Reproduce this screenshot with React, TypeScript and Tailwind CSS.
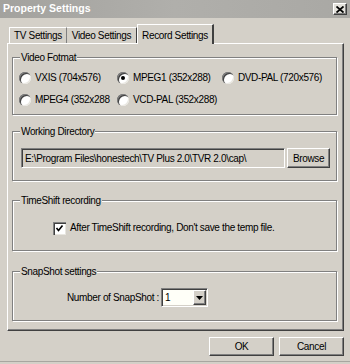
import React from 'react';

const sunken = 'border border-t-[#808080] border-l-[#808080] border-r-white border-b-white shadow-[inset_1px_1px_0_#404040,inset_-1px_-1px_0_#d4d0c8]';
const raised = 'border border-t-white border-l-white border-r-[#404040] border-b-[#404040] shadow-[inset_-1px_-1px_0_#808080]';

function Group({ title, className, children }: { title: string; className: string; children: React.ReactNode }) {
    return (
        <div className={`relative border border-[#808080] shadow-[inset_1px_1px_0_#fff,1px_1px_0_#fff] ${className}`}>
            <span className="absolute -top-[7px] left-[7px] px-[1px] bg-[#d4d0c8] leading-[13px]">{title}</span>
            {children}
        </div>
    );
}

function Radio({ label, checked, width }: { label: string; checked?: boolean; width: string }) {
    return (
        <div className={`flex items-center gap-[4px] ${width}`}>
            <span className="relative w-[12px] h-[12px] rounded-full bg-white shadow-[inset_1px_1px_0_#808080,inset_2px_2px_0_#404040,inset_-1px_-1px_0_#e8e6e0] flex items-center justify-center">
                {checked && <span className="w-[4px] h-[4px] rounded-full bg-black" />}
            </span>
            <span className="leading-[14px] whitespace-nowrap">{label}</span>
        </div>
    );
}

export default function App() {
    return (
        <div className="w-[350px] h-[364px] bg-[#d4d0c8] text-black text-[10px] tracking-[-0.35px] flex flex-col overflow-hidden" style={{ fontFamily: '"Liberation Sans", Arial, sans-serif' }}>
            {/* Title bar */}
            <div className="h-[18px] flex items-center justify-between pl-[3px] pr-[3px] bg-gradient-to-r from-[#a3a29e] via-[#b0afab] to-[#a9a8a4]">
                <span className="text-white font-bold text-[10.5px] tracking-normal">Property Settings</span>
                <span className={`w-[14px] h-[12px] bg-[#e4e2dc] flex items-center justify-center ${raised}`}>
                    <svg width="8" height="7" viewBox="0 0 8 7">
                        <path d="M0.5 0.5 L7.5 6.5 M7.5 0.5 L0.5 6.5" stroke="#000" strokeWidth="1.8" />
                    </svg>
                </span>
            </div>

            <div className="pl-[7px] pr-[6px] pt-[6px] flex flex-col">
                {/* Tabs */}
                <div className="flex items-end h-[19px] pl-[2px]">
                    <div className="w-[58px] h-[16px] flex items-center justify-center border-t border-l border-white border-r border-r-[#808080]">TV Settings</div>
                    <div className="w-[70px] h-[16px] flex items-center justify-center border-t border-white border-r border-r-[#404040]">Video Settings</div>
                    <div className="relative z-10 w-[77px] h-[20px] -mb-px bg-[#d4d0c8] flex items-start pt-[3px] justify-center border-t border-l border-white border-r-2 border-r-[#404040]">Record Settings</div>
                </div>

                {/* Panel */}
                <div className="h-[288px] border border-t-white border-l-white border-r-[#404040] border-b-[#404040] shadow-[inset_-1px_-1px_0_#808080] pl-[4px] pr-[6px] flex flex-col">
                    <Group title="Video Fotmat" className="mt-[13px] h-[58px] pt-[13px] pl-[6px]">
                        <div className="flex">
                            <Radio label="VXIS (704x576)" width="w-[98px]" />
                            <Radio label="MPEG1 (352x288)" checked width="w-[105px]" />
                            <Radio label="DVD-PAL (720x576)" width="w-[100px]" />
                        </div>
                        <div className="flex mt-[8px]">
                            <Radio label="MPEG4 (352x288" width="w-[98px]" />
                            <Radio label="VCD-PAL (352x288)" width="w-[105px]" />
                        </div>
                    </Group>

                    <Group title="Working Directory" className="mt-[16px] h-[50px] pt-[16px] pl-[8px]">
                        <div className="flex gap-[2px]">
                            <div className={`w-[264px] h-[20px] flex items-center pl-[3px] ${sunken}`}>
                                E:\Program Files\honestech\TV Plus 2.0\TVR 2.0\cap\
                            </div>
                            <button className={`w-[43px] h-[20px] bg-[#d4d0c8] flex items-center justify-center ${raised}`}>Browse</button>
                        </div>
                    </Group>

                    <Group title="TimeShift recording" className="mt-[19px] h-[51px] pt-[20px] pl-[40px]">
                        <div className="flex items-center gap-[4px] h-[14px]">
                            <span className="w-[13px] h-[13px] bg-white shadow-[inset_1px_1px_0_#808080,inset_2px_2px_0_#404040,inset_-1px_-1px_0_#e8e6e0] flex items-center justify-center">
                                <svg width="9" height="9" viewBox="0 0 9 9">
                                    <path d="M1.5 4 L3.5 6.5 L7.5 1.5" stroke="#000" strokeWidth="1.6" fill="none" />
                                </svg>
                            </span>
                            <span className="leading-[14px]">After TimeShift recording, Don't save the temp file.</span>
                        </div>
                    </Group>

                    <Group title="SnapShot settings" className="mt-[20px] h-[50px] pt-[16px] pl-[54px]">
                        <div className="flex items-center gap-[2px]">
                            <span>Number of SnapShot :</span>
                            <div className={`w-[47px] h-[19px] bg-[#fffff8] flex items-center justify-between pl-[3px] pr-[1px] ${sunken}`}>
                                <span>1</span>
                                <span className={`w-[13px] h-[15px] bg-[#d4d0c8] flex items-center justify-center ${raised}`}>
                                    <svg width="7" height="4" viewBox="0 0 7 4">
                                        <path d="M0 0 H7 L3.5 4 Z" fill="#000" />
                                    </svg>
                                </span>
                            </div>
                        </div>
                    </Group>
                </div>

                {/* Dialog buttons */}
                <div className="flex justify-end gap-[5px] mt-[6px]">
                    <button className={`w-[65px] h-[19px] bg-[#d4d0c8] flex items-center justify-center ${raised}`}>OK</button>
                    <button className={`w-[65px] h-[19px] bg-[#d4d0c8] flex items-center justify-center ${raised}`}>Cancel</button>
                </div>
            </div>
            <div className="mt-auto h-[3px] border-t border-[#a8a6a0]" />
        </div>
    );
}
